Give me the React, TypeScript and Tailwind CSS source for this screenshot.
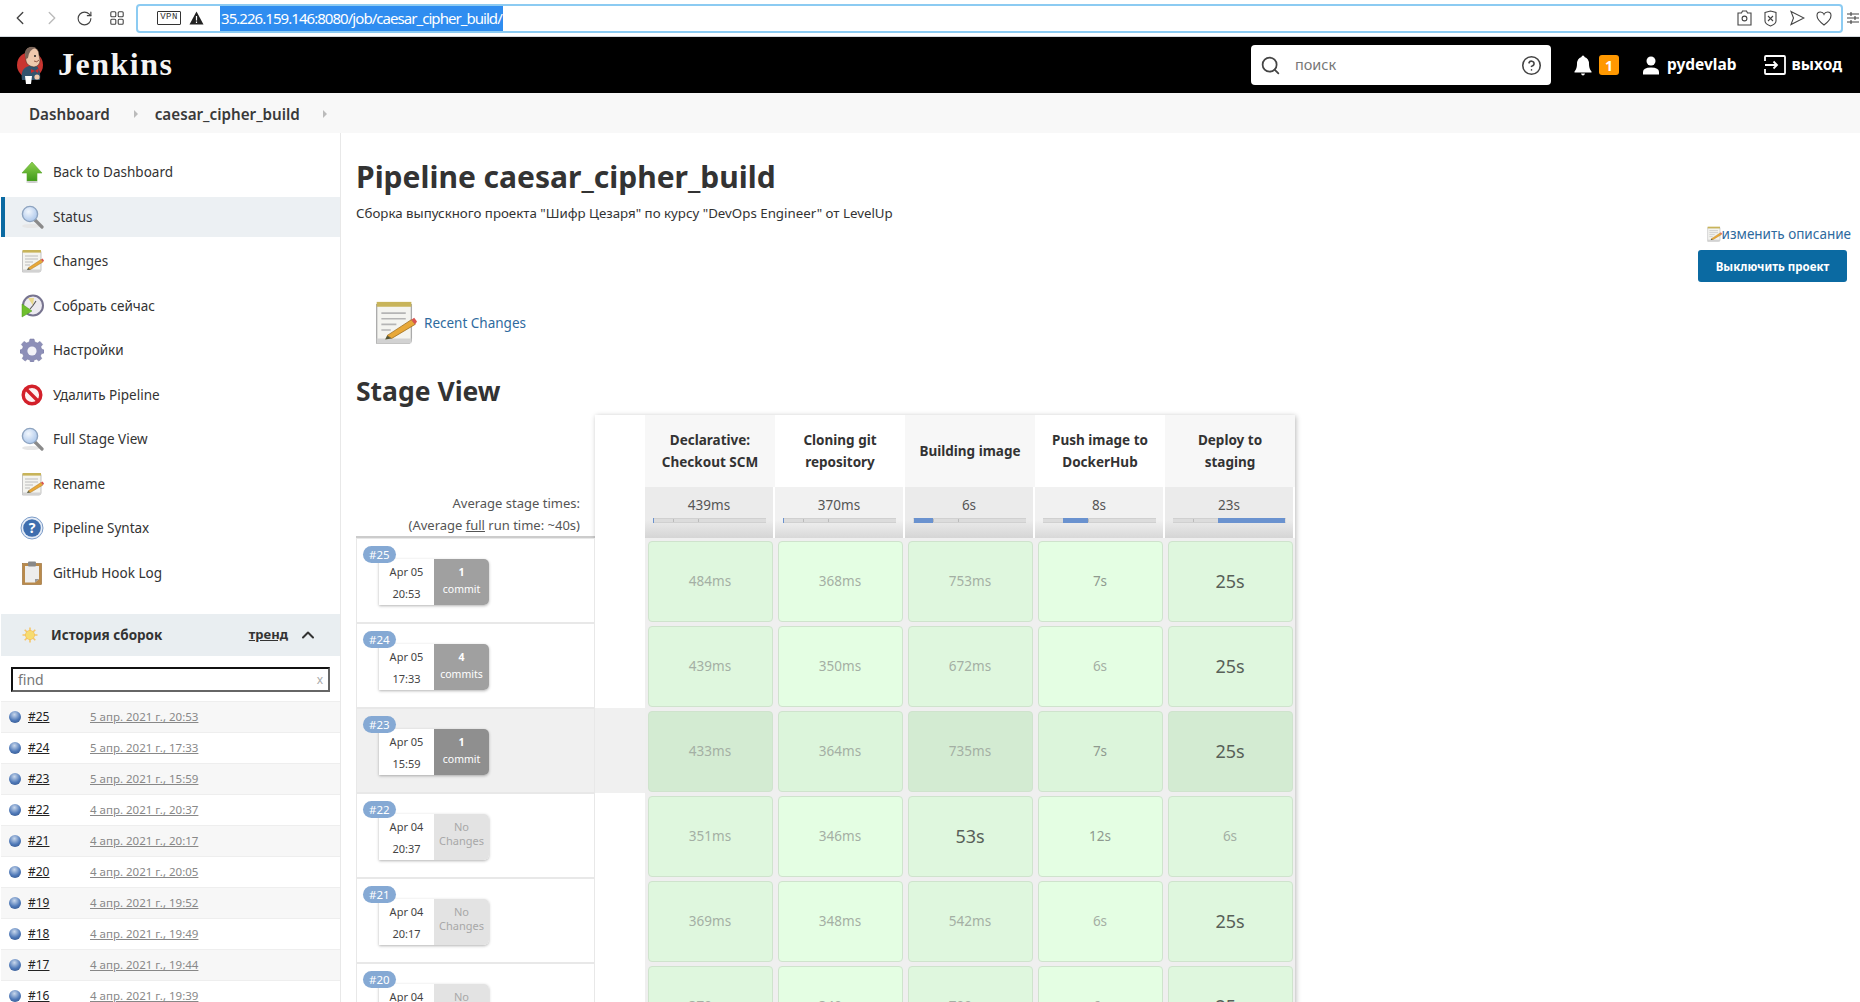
import React from 'react';
import { ChevronLeft, ChevronRight, ChevronUp, CircleHelp, RotateCw, Search } from 'lucide-react';

// icons below are hand drawn, the package has nothing close to the old Jenkins tango set
function ArrowIcon() {
  return (
    <svg width="24" height="24" viewBox="0 0 24 24">
      <defs>
        <linearGradient id="arrowG" x1="0" y1="0" x2="0" y2="1">
          <stop offset="0" stopColor="#8fd14f" />
          <stop offset="1" stopColor="#3f9a1a" />
        </linearGradient>
      </defs>
      <path d="M12 2 L22 13 H17 V21 H7 V13 H2 Z" fill="url(#arrowG)" stroke="#5da82e" strokeWidth="0.6" />
      <ellipse cx="12" cy="22" rx="6" ry="1" fill="#ccc" />
    </svg>
  );
}

function GlassIcon({ id }: { id: string }) {
  return (
    <svg width="24" height="24" viewBox="0 0 24 24">
      <defs>
        <radialGradient id={id} cx="0.4" cy="0.35" r="0.7">
          <stop offset="0" stopColor="#f2f7fd" />
          <stop offset="1" stopColor="#a9c5ea" />
        </radialGradient>
      </defs>
      <ellipse cx="11" cy="21" rx="9" ry="2" fill="#e6e6e6" />
      <path d="M15 15 L22 22" stroke="#8a8a8a" strokeWidth="3.2" strokeLinecap="round" />
      <circle cx="10" cy="9" r="7.6" fill={`url(#${id})`} stroke="#8ea4c0" strokeWidth="1.4" />
    </svg>
  );
}

function NotepadIcon({ size = 24 }: { size?: number }) {
  return (
    <svg width={size} height={size} viewBox="0 0 24 24">
      <path d="M2.5 2.5 H21 V21 Q21 23 19 23 H2.5 Z" fill="#f4f4f0" stroke="#aaa" strokeWidth="0.7" />
      <rect x="2.5" y="1" width="18.5" height="2.6" fill="#c8b45a" />
      <path d="M2.5 20.5 H21 V23 H2.5 Z" fill="#d2d2d2" />
      <path d="M5 7 H18 M5 10 H18 M5 13 H13 M5 16 H10" stroke="#b5b5b5" strokeWidth="0.9" />
      <path d="M8 19 L21 10.5 L23 13 L10.5 20.5 Z" fill="#e8a838" stroke="#9a6a1c" strokeWidth="0.4" />
      <path d="M8 19 L10.5 20.5 L7 21 Z" fill="#553" />
      <path d="M21 10.5 L23 13 L24 11.5 L22.5 9.5 Z" fill="#d9534f" />
    </svg>
  );
}

function BuildIcon() {
  return (
    <svg width="24" height="24" viewBox="0 0 24 24">
      <circle cx="13" cy="11.5" r="10" fill="#eceaf0" stroke="#77748f" strokeWidth="2" />
      <path d="M13 11.5 L8 4 L14 4 Z" fill="#e9d98c" />
      <path d="M13 11.5 L16 7 M13 11.5 L10 15" stroke="#555" strokeWidth="1.1" />
      <path d="M2 10 L12 17 L2 23 Z" fill="#6fbf2e" stroke="#4c9a1d" strokeWidth="0.5" />
    </svg>
  );
}

function GearIcon() {
  return (
    <svg width="24" height="24" viewBox="0 0 24 24">
      <path
        d="M10 1 H14 L14.8 4 L17.4 5 L20 3.4 L22.6 6.4 L20.8 8.8 L21.6 11 L24 12 V15 L21.4 15.8 L20.4 18 L21.8 20.6 L18.8 23 L16.6 21.2 L14 22 L13.6 24 H10.4 L10 22 L7.4 21.2 L5.2 23 L2.2 20.6 L3.6 18 L2.6 15.8 L0 15 V12 L2.4 11 L3.2 8.8 L1.4 6.4 L4 3.4 L6.6 5 L9.2 4 Z"
        fill="#8d8fb8"
        stroke="#74769f"
        strokeWidth="0.5"
      />
      <circle cx="12" cy="13" r="4.6" fill="#f3f3f8" />
    </svg>
  );
}

function StopIcon() {
  return (
    <svg width="24" height="24" viewBox="0 0 24 24">
      <circle cx="12" cy="12" r="8.8" fill="#fdf2f2" stroke="#d3202a" strokeWidth="3.4" />
      <path d="M6 6 L18 18" stroke="#d3202a" strokeWidth="3.4" />
    </svg>
  );
}

function HelpIcon() {
  return (
    <svg width="24" height="24" viewBox="0 0 24 24">
      <circle cx="12" cy="12" r="11" fill="#e6edf7" stroke="#7c9cc8" strokeWidth="1" />
      <circle cx="12" cy="12" r="8.8" fill="#3f6eae" />
      <text x="12" y="17" textAnchor="middle" fontSize="14" fontWeight="700" fill="#fff" fontFamily="Noto Sans">?</text>
    </svg>
  );
}

function ClipboardIcon() {
  return (
    <svg width="24" height="24" viewBox="0 0 24 24">
      <rect x="2.5" y="2.5" width="19" height="21" fill="#b98a4b" stroke="#94682f" strokeWidth="0.6" />
      <path d="M5 5 H19 V18 L15 21.5 H5 Z" fill="#ededed" />
      <path d="M15 21.5 L19 18 H15 Z" fill="#999" />
      <rect x="8" y="0.5" width="8" height="5" rx="1" fill="#888" />
    </svg>
  );
}

function SunIcon() {
  return (
    <svg width="16" height="16" viewBox="0 0 16 16">
      <g stroke="#f5c66a" strokeWidth="1.6">
        <path d="M8 0.5 V15.5 M0.5 8 H15.5 M2.7 2.7 L13.3 13.3 M13.3 2.7 L2.7 13.3" />
      </g>
      <circle cx="8" cy="8" r="4.6" fill="#f7dc6f" stroke="#f2b950" strokeWidth="0.6" />
    </svg>
  );
}

function JenkinsLogo() {
  return (
    <svg width="30" height="40" viewBox="0 0 30 40">
      <circle cx="14" cy="20" r="13" fill="#c93530" />
      <path d="M6 35 Q4 23 13 21 L21 21 Q25 26 24 35 Z" fill="#33546e" />
      <path d="M9 8 Q10 2 16 2 Q23 3 23 10 L24 15 Q24 21 18 22 Q11 21 10 16 Z" fill="#efc9ad" stroke="#3a2a20" strokeWidth="0.5" />
      <path d="M9 8 Q10 2 16 2 Q19 2 20 3 Q13 4 12 13 L10 14 Z" fill="#7b655a" />
      <circle cx="19" cy="11" r="1" fill="#222" />
      <path d="M15 24 L19 26 L23 23 L22 28 L19 26 L15 28 Z" fill="#c92a2a" />
      <path d="M18 16 Q21 18 23 15" stroke="#7a3a2a" strokeWidth="0.8" fill="none" />
      <path d="M9 31 H16 L15 39 H10 Z" fill="#fff" />
      <circle cx="21" cy="32" r="2.6" fill="#efc9ad" />
    </svg>
  );
}

function BrowserBar() {
  return (
    <div className="h-[37px] flex items-center bg-white border-b border-[#d5dbe0] text-[#444]">
      <div className="w-[136px] flex items-center shrink-0">
        <ChevronLeft className="ml-[9px]" size={22} strokeWidth={1.5} />
        <ChevronRight className="ml-[10px] text-[#bbb]" size={22} strokeWidth={1.5} />
        <RotateCw className="ml-[13px]" size={17} strokeWidth={1.6} />
        <svg className="ml-[17px]" width="14" height="14" viewBox="0 0 14 14" fill="none" stroke="#444" strokeWidth="1.1">
          <rect x="0.8" y="0.8" width="5" height="5" rx="1" />
          <rect x="8.2" y="0.8" width="5" height="5" rx="1" />
          <rect x="0.8" y="8.2" width="5" height="5" rx="1" />
          <rect x="8.2" y="8.2" width="5" height="5" rx="1" />
        </svg>
      </div>
      <div className="w-[1707px] h-[29px] flex items-center border-2 border-[#8ccbf2] rounded-[4px]">
        <span className="ml-[19px] w-[24px] h-[14px] flex items-center justify-center border border-[#333] rounded-[1px] text-[9px] tracking-[0.5px] text-[#333] font-['Liberation_Mono',monospace]">VPN</span>
        <svg className="ml-[8px]" width="15" height="14" viewBox="0 0 15 14">
          <path d="M7.5 0.5 L14.5 13.5 H0.5 Z" fill="#222" />
          <path d="M7.5 5 V9.5 M7.5 10.5 V12" stroke="#fff" strokeWidth="1.2" />
        </svg>
        <span className="ml-[16px] bg-[#2f8df0] text-white text-[15px] leading-[25px] tracking-[-0.95px] px-px">35.226.159.146:8080/job/caesar_cipher_build/</span>
        <div className="ml-auto flex items-center gap-[11px] mr-[9px]">
          <svg width="15" height="16" viewBox="0 0 15 16" fill="none" stroke="#444" strokeWidth="1.1">
            <path d="M1 3 H4.5 L5.5 1 H9.5 L10.5 3 H14 V15 H1 Z" />
            <circle cx="7.5" cy="8.5" r="2.4" />
          </svg>
          <svg width="15" height="17" viewBox="0 0 15 17" fill="none" stroke="#444" strokeWidth="1.1">
            <path d="M2 2.5 L7.5 1 L13 2.5 V11 Q13 14 7.5 16 Q2 14 2 11 Z" />
            <path d="M5 6 L10 11 M10 6 L5 11" />
          </svg>
          <svg width="16" height="16" viewBox="0 0 16 16" fill="none" stroke="#444" strokeWidth="1.1">
            <path d="M2 1.5 L15 8 L2 14.5 L4.5 8 Z" />
          </svg>
          <svg width="16" height="15" viewBox="0 0 16 15" fill="none" stroke="#444" strokeWidth="1.1">
            <path d="M8 14 Q1 9 1 4.6 Q1 1 4.4 1 Q7 1 8 3.4 Q9 1 11.6 1 Q15 1 15 4.6 Q15 9 8 14 Z" />
          </svg>
        </div>
      </div>
      <svg className="ml-[4px]" width="12" height="14" viewBox="0 0 12 14" stroke="#444" strokeWidth="1.1">
        <path d="M0 3 H12 M0 7 H12 M0 11 H12 M4 1 V5 M8 5 V9 M4 9 V13" />
      </svg>
    </div>
  );
}

function TopHeader() {
  return (
    <div className="h-[56px] bg-black flex items-center text-white pl-[16px]">
      <JenkinsLogo />
      <span className="ml-[12px] mb-[3px] text-[32px] font-bold tracking-[1.5px] text-[#f4f4f4] font-['Liberation_Serif',serif]">Jenkins</span>
      <div className="ml-auto w-[300px] h-[40px] bg-white rounded-[4px] flex items-center text-[#444]">
        <Search className="ml-[9px]" size={21} strokeWidth={2} />
        <span className="ml-[14px] text-[14.5px] text-[#777]">поиск</span>
        <CircleHelp className="ml-auto mr-[9px]" size={21} strokeWidth={1.8} />
      </div>
      <svg className="ml-[23px]" width="18" height="21" viewBox="0 0 18 21" fill="#fff">
        <path d="M9 0.5 Q10.5 0.5 10.5 2 Q15 3.5 15 9 Q15 14 17.5 16.5 V17.5 H0.5 V16.5 Q3 14 3 9 Q3 3.5 7.5 2 Q7.5 0.5 9 0.5 Z" />
        <path d="M7 18.5 H11 Q10.5 20.5 9 20.5 Q7.5 20.5 7 18.5 Z" />
      </svg>
      <span className="ml-[7px] w-[20px] h-[20px] rounded-[3px] bg-[#ff9800] flex items-center justify-center text-[14px] font-bold">1</span>
      <svg className="ml-[23px]" width="18" height="19" viewBox="0 0 18 19" fill="#fff">
        <circle cx="9" cy="5" r="4.5" />
        <path d="M1 18.5 V16 Q1 11.5 9 11.5 Q17 11.5 17 16 V18.5 Z" />
      </svg>
      <span className="ml-[7px] text-[15.5px] font-bold">pydevlab</span>
      <svg className="ml-[27px]" width="22" height="20" viewBox="0 0 22 20" fill="none" stroke="#fff" strokeWidth="1.8">
        <path d="M1 6 V2 Q1 1 2 1 H20 Q21 1 21 2 V18 Q21 19 20 19 H2 Q1 19 1 18 V14" />
        <path d="M1 10 H13 M9.5 6.5 L13 10 L9.5 13.5" />
      </svg>
      <span className="ml-[6px] mr-[18px] text-[15.5px] font-bold">выход</span>
    </div>
  );
}

function Breadcrumb() {
  return (
    <div className="h-[40px] pt-[2px] bg-[#f8f8f8] flex items-center text-[15.2px] font-semibold text-[#3a3a3a] pl-[29px]">
      <span>Dashboard</span>
      <span className="ml-[24px] w-0 h-0 border-y-[4px] border-y-transparent border-l-[4px] border-l-[#bbb]" />
      <span className="ml-[17px]">caesar_cipher_build</span>
      <span className="ml-[23px] w-0 h-0 border-y-[4px] border-y-transparent border-l-[4px] border-l-[#bbb]" />
    </div>
  );
}

const tasks = [
  { label: 'Back to Dashboard', icon: <ArrowIcon /> },
  { label: 'Status', icon: <GlassIcon id="glassA" />, active: true },
  { label: 'Changes', icon: <NotepadIcon /> },
  { label: 'Собрать сейчас', icon: <BuildIcon /> },
  { label: 'Настройки', icon: <GearIcon /> },
  { label: 'Удалить Pipeline', icon: <StopIcon /> },
  { label: 'Full Stage View', icon: <GlassIcon id="glassB" /> },
  { label: 'Rename', icon: <NotepadIcon /> },
  { label: 'Pipeline Syntax', icon: <HelpIcon /> },
  { label: 'GitHub Hook Log', icon: <ClipboardIcon /> },
];

const builds = [
  ['#25', '5 апр. 2021 г., 20:53'],
  ['#24', '5 апр. 2021 г., 17:33'],
  ['#23', '5 апр. 2021 г., 15:59'],
  ['#22', '4 апр. 2021 г., 20:37'],
  ['#21', '4 апр. 2021 г., 20:17'],
  ['#20', '4 апр. 2021 г., 20:05'],
  ['#19', '4 апр. 2021 г., 19:52'],
  ['#18', '4 апр. 2021 г., 19:49'],
  ['#17', '4 апр. 2021 г., 19:44'],
  ['#16', '4 апр. 2021 г., 19:39'],
];

function Sidebar() {
  return (
    <div className="w-[341px] shrink-0 border-r border-[#e8e8e8] pt-[17px] pl-px">
      {tasks.map((t) => (
        <div key={t.label} className="h-[44.5px] flex items-center">
          <div className={'w-full h-[40px] flex items-center border-l-4 ' + (t.active ? 'bg-[#ecf0f3] border-[#0b6aa2]' : 'border-transparent')}>
            <div className="ml-[15px] w-[24px] h-[24px] flex items-center justify-center">{t.icon}</div>
            <span className="ml-[9px] text-[13.5px] text-[#333]">{t.label}</span>
          </div>
        </div>
      ))}

      <div className="mt-[19px] h-[42px] bg-[#e9eef1] flex items-center text-[#333]">
        <div className="ml-[21px]"><SunIcon /></div>
        <span className="ml-[13px] text-[13.5px] font-bold">История сборок</span>
        <span className="ml-auto text-[13px] font-bold underline">тренд</span>
        <ChevronUp className="ml-[10px] mr-[22px]" size={20} strokeWidth={2.4} />
      </div>

      <div className="mt-[11px] mx-[10px] h-[25px] flex items-center justify-between border-2 border-t-[#111] border-l-[#111] border-r-[#666] border-b-[#666] text-[14px] px-[5px] text-[#777]">
        <span>find</span>
        <span className="text-[#aaa] text-[12px]">x</span>
      </div>

      <div className="mt-[9px] border-t border-[#eee]">
        {builds.map(([num, date], i) => (
          <div key={num} className={'h-[31px] flex items-center border-b border-[#eee] ' + (i % 2 === 0 ? 'bg-[#f7f7f7]' : 'bg-white')}>
            <span className="ml-[8px] w-[12px] h-[12px] rounded-full bg-[radial-gradient(circle_at_45%_30%,#c9d8ec,#4f79b8_55%,#2c4c82)]" />
            <span className="ml-[7px] w-[62px] text-[12px] text-[#222] underline">{num}</span>
            <span className="text-[11.5px] text-[#888] underline">{date}</span>
          </div>
        ))}
      </div>
    </div>
  );
}

const stages = [
  { name: 'Declarative: Checkout SCM', avg: '439ms', from: 0, to: 1 },
  { name: 'Cloning git repository', avg: '370ms', from: 0, to: 1 },
  { name: 'Building image', avg: '6s', from: 1, to: 18 },
  { name: 'Push image to DockerHub', avg: '8s', from: 18, to: 40 },
  { name: 'Deploy to staging', avg: '23s', from: 40, to: 100 },
];

const runs = [
  { id: '#25', date: 'Apr 05', time: '20:53', n: '1', word: 'commit', cells: ['484ms', '368ms', '753ms', '7s', '25s'] },
  { id: '#24', date: 'Apr 05', time: '17:33', n: '4', word: 'commits', cells: ['439ms', '350ms', '672ms', '6s', '25s'] },
  { id: '#23', date: 'Apr 05', time: '15:59', n: '1', word: 'commit', cells: ['433ms', '364ms', '735ms', '7s', '25s'], hover: true },
  { id: '#22', date: 'Apr 04', time: '20:37', cells: ['351ms', '346ms', '53s', '12s', '6s'] },
  { id: '#21', date: 'Apr 04', time: '20:17', cells: ['369ms', '348ms', '542ms', '6s', '25s'] },
  { id: '#20', date: 'Apr 04', time: '20:05', cells: ['370ms', '340ms', '700ms', '6s', '25s'] },
];

function cellText(v: string) {
  if (v === '25s' || v === '53s') return 'text-[18px] text-[#586058]';
  if (v === '7s' || v === '12s') return 'text-[13.5px] text-[#8f9a8f]';
  return 'text-[13.5px] text-[#a4afa4]';
}

function RunLabel({ run }: { run: (typeof runs)[number] }) {
  return (
    <div className={'h-[85px] shrink-0 relative border border-[#e8e8e8] pt-[20px] pl-[22px] ' + (run.hover ? 'bg-[#f0f0f0]' : 'bg-white')}>
      <span className="absolute left-[6px] top-[7px] h-[17px] px-[6px] flex items-center rounded-full bg-[#85a9d4] text-white text-[11.5px]">{run.id}</span>
      <div className="flex w-[110px] h-[46px] shadow-[0_1px_3px_rgba(0,0,0,0.3)] rounded-r-[5px]">
        <div className="w-[55px] bg-white flex flex-col items-center justify-center gap-[7px] text-[11px] leading-[15px] text-[#444]">
          <span>{run.date}</span>
          <span>{run.time}</span>
        </div>
        {run.n ? (
          <div className={'w-[55px] pb-[3px] rounded-r-[5px] flex flex-col items-center justify-center text-white text-[10.5px] leading-[17px] ' + (run.hover ? 'bg-[#8f8f8f]' : 'bg-[#a0a0a0]')}>
            <span className="font-bold">{run.n}</span>
            <span>{run.word}</span>
          </div>
        ) : (
          <div className="w-[55px] pb-[6px] rounded-r-[5px] flex flex-col items-center justify-center bg-[#e3e3e3] text-[#a8a8a8] text-[11px] leading-[14px]">
            <span>No</span>
            <span>Changes</span>
          </div>
        )}
      </div>
    </div>
  );
}

function StageTable() {
  return (
    <div className="flex">
      <div className="w-[239px] shrink-0 pt-[72px]">
        <div className="h-[51px] pt-[5px] border-b-2 border-[#ccc] pr-[15px] text-right text-[13px] leading-[22px] text-[#555]">
          <div>Average stage times:</div>
          <div>(Average <span className="underline">full</span> run time: ~40s)</div>
        </div>
        {runs.map((r) => <RunLabel key={r.id} run={r} />)}
      </div>

      <div className="w-[700px] shadow-[1px_1px_5px_rgba(0,0,0,0.28)]">
        <div className="flex h-[72px]">
          <div className="w-[50px]" />
          {stages.map((s, i) => (
            <div key={s.name} className={'w-[130px] flex items-center justify-center text-center px-[13px] text-[13.5px] leading-[22px] font-bold text-[#333] ' + (i % 2 === 0 ? 'bg-[#f7f7f7]' : 'bg-white')}>
              {s.name}
            </div>
          ))}
        </div>
        <div className="flex h-[51px]">
          <div className="w-[50px]" />
          {stages.map((s, i) => (
            <div key={s.name} className={'w-[130px] border-r-2 border-white flex flex-col items-center pt-[8px] text-[13.5px] leading-[20px] text-[#555] ' + (i % 2 === 0 ? 'bg-[linear-gradient(#ebebeb_65%,#d5d5d5)]' : 'bg-[linear-gradient(#f1f1f1_65%,#d8d8d8)]')}>
              <span>{s.avg}</span>
              <div className="relative mt-[3px] w-[113px] h-[5px] bg-[#dcdcdc] border-y border-[#d0d0d0]">
                <span className="absolute left-[18%] top-0 w-px h-[3px] bg-[#bbb]" />
                <span className="absolute left-[40%] top-0 w-px h-[3px] bg-[#bbb]" />
                <span className="absolute top-[-1px] h-[5px] bg-[#6a92cf]" style={{ left: `${s.from}%`, width: `${s.to - s.from}%` }} />
              </div>
            </div>
          ))}
        </div>
        {runs.map((r) => (
          <div key={r.id} className="flex h-[85px]">
            <div className={'w-[50px] ' + (r.hover ? 'bg-[#f0f0f0]' : 'bg-white')} />
            {r.cells.map((v, i) => (
              <div key={i} className="w-[130px] bg-[#efefef] px-[2.5px] pt-[3px] pb-px">
                <div className={'h-full rounded-[4px] border border-[#cfe3cd] flex items-center justify-center ' + cellText(v) + ' ' + (r.hover ? (i % 2 === 0 ? 'bg-[#d3ebd2]' : 'bg-[#dcf5db]') : (i % 2 === 0 ? 'bg-[#dff7de]' : 'bg-[#e4fee3]'))}>
                  {v}
                </div>
              </div>
            ))}
          </div>
        ))}
      </div>
    </div>
  );
}

function MainPanel() {
  return (
    <div className="flex-1 min-w-0 pl-[15px]">
      <div className="flex justify-between items-start">
        <div className="pt-[24px]">
          <h1 className="text-[30px] leading-[40px] font-bold text-[#333]">Pipeline caesar_cipher_build</h1>
          <p className="mt-[6px] text-[13.3px] leading-[20px] text-[#333]">Сборка выпускного проекта "Шифр Цезаря" по курсу "DevOps Engineer" от LevelUp</p>
          <div className="mt-[77px] ml-[16px] flex items-center">
            <NotepadIcon size={45} />
            <span className="ml-[7px] pt-px text-[13.5px] text-[#2e6a9e]">Recent Changes</span>
          </div>
        </div>
        <div className="pt-[91px] pr-[9px] flex flex-col items-end">
          <div className="flex items-center h-[20px] text-[13.5px] text-[#2e6a9e]">
            <NotepadIcon size={16} />
            <span>изменить описание</span>
          </div>
          <button className="mt-[6px] mr-[4px] w-[149px] h-[32px] pt-px rounded-[3px] bg-[#0b6aa2] text-white text-[11.5px] font-bold">Выключить проект</button>
        </div>
      </div>
      <h2 className="mt-[28px] text-[26.5px] leading-[36px] font-bold text-[#333]">Stage View</h2>
      <div className="mt-[6px]">
        <StageTable />
      </div>
    </div>
  );
}

export default function App() {
  return (
    <div className="h-screen overflow-hidden bg-white font-['Noto_Sans',sans-serif]">
      <BrowserBar />
      <TopHeader />
      <Breadcrumb />
      <div className="flex">
        <Sidebar />
        <MainPanel />
      </div>
    </div>
  );
}
